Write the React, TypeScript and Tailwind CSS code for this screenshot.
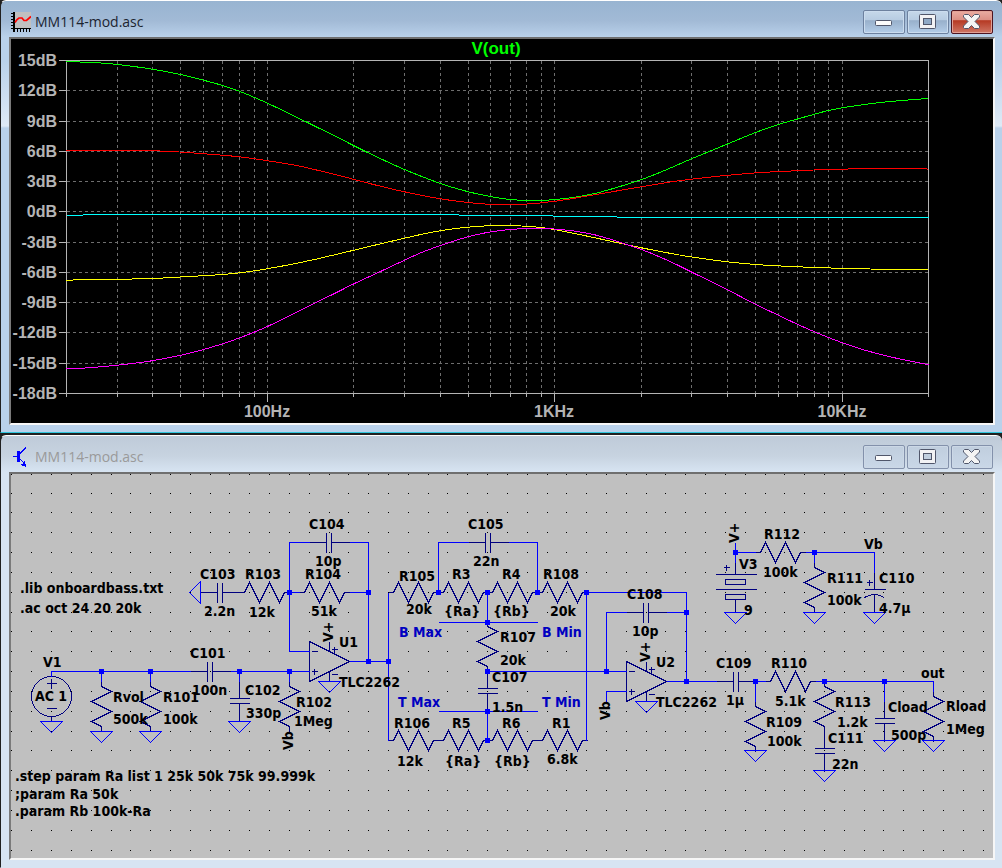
import { ReactNode } from 'react';

type Point = [number, number];

// ── WINDOW FRAME ──────────────────────────────────────
function MinimizeGlyph() {
  return (
    <svg viewBox="0 0 18 16" className="w-[18px] h-4" aria-hidden="true">
      <rect x="0.5" y="6.5" width="16" height="5" rx="1" fill="#fbfbfb" stroke="#50566a" />
    </svg>
  );
}

function MaximizeGlyph({ hole }: { hole: string }) {
  return (
    <svg viewBox="0 0 18 16" className="w-[18px] h-4" aria-hidden="true">
      <rect x="0.5" y="0.5" width="16" height="14" rx="1" fill="#f2f2f4" stroke="#50566a" />
      <rect x="4.5" y="4.5" width="8" height="6" fill={hole} stroke="#50566a" />
    </svg>
  );
}

function CloseGlyph() {
  return (
    <svg viewBox="0 0 18 16" className="w-[18px] h-4" aria-hidden="true">
      <path
        d="M0.5 1.5 L1.5 0.5 H5.5 L8.5 3.5 L11.5 0.5 H15.5 L16.5 1.5 V3 L12 7.5 L16.5 12 V13.5 L15.5 14.5 H11.5 L8.5 11.5 L5.5 14.5 H1.5 L0.5 13.5 V12 L5 7.5 L0.5 3 Z"
        fill="#f4f4f4"
        stroke="#50566a"
      />
    </svg>
  );
}

function Window({
  title,
  icon,
  active = false,
  children,
}: {
  title: string;
  icon: ReactNode;
  active?: boolean;
  children: ReactNode;
}) {
  const frame = active
    ? 'border-b-[#2fc6dd] bg-[linear-gradient(to_bottom,#98b4d1_0px,#a2bad6_20px,#b9d1ea_36px,#b9d1ea_60px,#dfeaf6_125px,#b9d1ea_127px)]'
    : 'border-b-[#d7e4f2] bg-[linear-gradient(to_bottom,#bfcbd9_0px,#c7d3e0_20px,#d7e4f2_36px)]';
  const button = active
    ? 'border-[#6d819f] bg-[linear-gradient(to_bottom,#c6d8ea_0%,#b7cce2_40%,#98b0cb_44%,#b4cde8_100%)]'
    : 'border-[#8391ab] bg-[linear-gradient(to_bottom,#c0cede_0%,#c9d7e7_100%)]';
  const close = active
    ? 'border-[#4e1420] bg-[linear-gradient(to_bottom,#eaaca2_0%,#dc8f84_40%,#b63a24_44%,#cf7766_100%)] shadow-[inset_0_0_0_1px_#e2a196]'
    : 'border-[#8391ab] bg-[linear-gradient(to_bottom,#c0cede_0%,#c9d7e7_100%)] shadow-[inset_0_0_0_1px_#ccd8e6]';
  const ring = active ? 'shadow-[inset_0_0_0_1px_#cbdcee]' : 'shadow-[inset_0_0_0_1px_#ccd8e6]';
  const base = 'flex items-center justify-center w-[42px] h-6 rounded-xs border';

  return (
    <section className={`pl-2 pr-[7px] pb-[7px] border-l border-l-[#202020] border-t border-t-white border-b rounded-t-md ${frame}`}>
      <header className="flex items-end gap-1 h-9 px-0.5 pb-[3px]">
        <div className="flex items-center gap-1 h-6 flex-1 min-w-0">
          {icon}
          <h1 className={`text-[14px] leading-6 truncate ${active ? 'text-[#1b2430]' : 'text-[#9a9a9a]'}`}>{title}</h1>
        </div>
        <div className="flex gap-0.5">
          <button type="button" aria-label="Minimize" className={`${base} ${button} ${ring}`}>
            <MinimizeGlyph />
          </button>
          <button type="button" aria-label="Maximize" className={`${base} ${button} ${ring}`}>
            <MaximizeGlyph hole={active ? '#8fa9c6' : '#c0cede'} />
          </button>
          <button type="button" aria-label="Close" className={`${base} ${close}`}>
            <CloseGlyph />
          </button>
        </div>
      </header>
      <div className="border-2 border-t-[#6f6f6f] border-l-[#7a7a7a] border-r-[#f6f6f6] border-b-[#f6f6f6]">{children}</div>
    </section>
  );
}

function PlotIcon() {
  return (
    <svg viewBox="0 0 20 20" className="w-5 h-5 shrink-0" aria-hidden="true">
      <g shapeRendering="crispEdges">
        <rect x="3" y="0" width="17" height="17" fill="#c0c0c0" />
        <path d="M2 0h2v20h-2zM2 16h18v1H2z" fill="#000" />
        <path
          d="M0 1h2v1H0zM0 4h2v1H0zM0 7h2v1H0zM0 10h2v1H0zM0 13h2v1H0zM0 16h2v1H0zM6 17h1v3H6zM9 17h1v3H9zM12 17h1v3h-1zM15 17h1v3h-1zM18 17h1v3h-1z"
          fill="#000"
        />
      </g>
      <path d="M4 10.5 L6 7.5 L8 6 H11 L13 8.5 H15.5 L20 4.5" fill="none" stroke="#f00" strokeWidth="1.7" />
    </svg>
  );
}

function TransistorIcon() {
  return (
    <svg viewBox="0 0 20 20" className="w-5 h-5 shrink-0" shapeRendering="crispEdges" aria-hidden="true">
      <path d="M2 9h4v1H2zM6 4h3v11H6z" fill="#00f" />
      <path d="M9 6.5 L15 0.5 M9 12 L15 18" stroke="#00f" />
      <path d="M14 14v5h-4l1-1h-1v-1h2v-1h1v-2z M14 18h1v2h-1z" fill="#00f" />
    </svg>
  );
}

// ── FREQUENCY RESPONSE PLOT ───────────────────────────
const LEFT = 66;
const RIGHT = 928;
const TOP = 60;
const BOTTOM = 393;

const DB_ROWS = [15, 12, 9, 6, 3, 0, -3, -6, -9, -12, -15, -18].map((db) => ({
  db,
  y: Math.round(TOP + ((15 - db) / 33) * (BOTTOM - TOP)),
}));

const FREQS = [
  30, 40, 50, 60, 70, 80, 90, 100, 200, 300, 400, 500, 600, 700, 800, 900, 1000,
  2000, 3000, 4000, 5000, 6000, 7000, 8000, 9000, 10000,
];

const freqX = (f: number) => Math.round(LEFT + (Math.log10(f / 20) / 3) * (RIGHT - LEFT));

const TRACES: { color: string; points: Point[] }[] = [
  {
    color: '#00ff00',
    points: [
      [66, 61], [97, 62.3], [117, 64], [152, 68.7], [180, 74], [203, 79.7], [222, 85], [239, 90.8], [254, 97],
      [267, 102.7], [290, 113.7], [313, 125], [334, 135.3], [353, 145], [375, 155.8], [404, 169], [440, 183],
      [468, 191.3], [490, 196], [508, 198.8], [532, 200.2], [555, 199], [575, 196.6], [600, 191.6],
      [641, 179], [668, 168.3], [691, 158.3], [727, 143.5], [755, 132], [778, 124], [797, 118.5], [814, 113.7],
      [828, 110], [842, 107.3], [862, 104.3], [880, 102], [901, 100], [928, 98],
    ],
  },
  {
    color: '#ff0000',
    points: [
      [66, 150], [140, 150], [170, 151], [203, 153.2], [239, 156.3], [267, 160.2], [295, 164.8], [313, 168.8],
      [334, 173.8], [353, 178.8], [375, 184.5], [404, 191.3], [440, 198.3], [468, 202], [490, 203.8], [520, 204],
      [555, 200.7], [600, 193.2], [641, 186.3], [668, 181.8], [691, 178.7], [717, 175.8], [755, 172.4], [797, 170.2],
      [828, 169], [862, 168.3], [915, 168.2], [928, 168.6],
    ],
  },
  {
    color: '#ffff00',
    points: [
      [66, 279.6], [117, 278.8], [152, 278], [180, 276.5], [203, 275.2], [222, 274], [239, 272.3], [254, 270.3],
      [267, 268.2], [290, 264], [313, 259.2], [334, 254.3], [353, 249.8], [380, 243.3], [404, 237.7], [425, 233],
      [440, 230.3], [455, 228], [468, 226.6], [485, 225.4], [500, 225], [515, 225.2], [541, 227], [555, 229.3],
      [575, 233.2], [600, 238.5], [641, 247.3], [668, 252.5], [691, 256.5], [727, 261.3], [755, 264],
      [797, 266.3], [842, 267.9], [870, 268.5], [898, 269], [928, 269.3],
    ],
  },
  {
    color: '#ff00ff',
    points: [
      [66, 368.4], [79, 367.9], [100, 366.3], [117, 364.7], [134, 362.7], [152, 360.2], [180, 354.8], [203, 349],
      [222, 343.3], [239, 337.4], [254, 331.5], [267, 326], [290, 314.8], [313, 303.3], [334, 293], [353, 283.5],
      [375, 273.3], [404, 259.7], [421, 252], [440, 245], [455, 240], [468, 236.2], [485, 232.3], [500, 230],
      [520, 228.3], [540, 227.9], [553, 228.5], [575, 230.7], [595, 234.5], [610, 238.8], [641, 249], [668, 260.3],
      [691, 271.5], [727, 289.3], [755, 303.8], [778, 314.8], [797, 323.8], [814, 331.3], [828, 337], [842, 342.3],
      [862, 349], [890, 356.4], [928, 364.3],
    ],
  },
];

// Catmull-Rom spline through the sampled points
function smoothPath(points: Point[]) {
  let d = `M${points[0][0]} ${points[0][1]}`;
  for (let i = 0; i < points.length - 1; i++) {
    const p0 = points[i - 1] || points[i];
    const p1 = points[i];
    const p2 = points[i + 1];
    const p3 = points[i + 2] || p2;
    const c1 = [p1[0] + (p2[0] - p0[0]) / 6, p1[1] + (p2[1] - p0[1]) / 6];
    const c2 = [p2[0] - (p3[0] - p1[0]) / 6, p2[1] - (p3[1] - p1[1]) / 6];
    d += `C${c1[0]} ${c1[1]} ${c2[0]} ${c2[1]} ${p2[0]} ${p2[1]}`;
  }
  return d;
}

function ResponsePlot() {
  return (
    <svg viewBox="11 39 982 384" className="block w-full h-auto bg-black" role="img" aria-label="V(out)">
      <g transform="translate(0.5 0.5)" shapeRendering="crispEdges" fill="none">
        <g stroke="#6e6e6e" strokeDasharray="3 3">
          {DB_ROWS.slice(1, -1).map(({ db, y }) => (
            <path key={db} d={`M${LEFT} ${y}H${RIGHT}`} />
          ))}
          {FREQS.map((f) => (
            <path key={f} d={`M${freqX(f)} ${TOP}V${BOTTOM}`} />
          ))}
        </g>
        <g stroke="#b4b4b4">
          <path d={`M${LEFT} ${TOP}H${RIGHT}V${BOTTOM}H${LEFT}Z`} />
          {DB_ROWS.map(({ db, y }) => (
            <path key={db} d={`M58 ${y}H${LEFT}`} />
          ))}
          {[20, ...FREQS, 20000].map((f) => (
            <path key={f} d={`M${freqX(f)} ${BOTTOM}v${[100, 1000, 10000].includes(f) ? 8 : 3}`} />
          ))}
        </g>
        {TRACES.map(({ color, points }) => (
          <path key={color} d={smoothPath(points)} stroke={color} />
        ))}
        <path d="M66 215H82M82 214H458M458 215H552M552 216H616M616 217H928" stroke="#00ffff" />
      </g>
      <g className="font-['Liberation_Sans',Arial,sans-serif] font-bold text-[16px]" fill="#b4b4b4">
        {DB_ROWS.map(({ db, y }) => (
          <text key={db} x="57" y={y + 6} textAnchor="end">{`${db}dB`}</text>
        ))}
        <text x="267" y="417" textAnchor="middle">100Hz</text>
        <text x="554" y="417" textAnchor="middle">1KHz</text>
        <text x="842" y="417" textAnchor="middle">10KHz</text>
        <text x="496" y="54" textAnchor="middle" fill="#00ff00" className="text-[17px]">V(out)</text>
      </g>
    </svg>
  );
}

// ── SCHEMATIC ─────────────────────────────────────────
const RESISTORS_H: Point[] = [
  [239, 592], [299, 592], [388, 592], [438, 592], [487, 592], [537, 592],
  [388, 740], [438, 740], [487, 740], [537, 740], [755, 552], [765, 681],
];
const RESISTORS_V: Point[] = [
  [101, 681], [150, 681], [289, 681], [487, 621], [755, 701], [814, 562], [824, 681], [933, 691],
];
const CAPS_H: Point[] = [[200, 592], [190, 671], [309, 542], [468, 542], [626, 612], [716, 681]];
const CAPS_V: Point[] = [[239, 681], [487, 671], [824, 731], [884, 701]];
const OPAMPS: Point[] = [[309, 661], [626, 681]];
const GROUNDS: Point[] = [
  [51, 721], [101, 731], [150, 731], [239, 721], [329, 681], [646, 701], [755, 750],
  [735, 612], [814, 612], [874, 612], [824, 770], [884, 740], [933, 740],
];
const NODES: Point[] = [
  [101, 671], [150, 671], [239, 671], [289, 671], [289, 592], [368, 592], [368, 661], [388, 661],
  [438, 592], [487, 592], [537, 592], [487, 622], [487, 671], [487, 711], [487, 740], [586, 592],
  [606, 671], [686, 612], [686, 681], [735, 552], [755, 681], [814, 552], [824, 681], [884, 681],
];
const WIRES = [
  'M51 676V671H190', 'M230 671H309', 'M101 671V681', 'M150 671V681', 'M239 671V681', 'M289 671V681',
  'M289 592V542H309', 'M349 542H368V661', 'M349 592H368', 'M289 592H299', 'M289 592V651H309',
  'M349 661H388', 'M388 592V740', 'M438 592V542H468', 'M508 542H537V592', 'M487 592V621',
  'M438 622H537', 'M487 711V740', 'M438 711H537', 'M487 671H626', 'M586 592V740',
  'M586 592H686V681', 'M606 671V612H626', 'M666 612H686', 'M666 681H716', 'M626 691H606V701',
  'M755 681V701', 'M755 681H765', 'M735 542V562', 'M735 552H755', 'M805 552H874V572',
  'M814 552V562', 'M815 681H933V691', 'M884 681V701',
];

const LABELS: [number, number, string][] = [
  [20, 593, '.lib onboardbass.txt'], [20, 613, '.ac oct 24 20 20k'],
  [15, 781, '.step param Ra list 1 25k 50k 75k 99.999k'], [15, 799, ';param Ra 50k'], [15, 816, '.param Rb 100k-Ra'],
  [43, 667, 'V1'], [35, 701, 'AC 1'], [113, 702, 'Rvol'], [113, 724, '500k'], [163, 702, 'R101'], [163, 724, '100k'],
  [190, 658, 'C101'], [192, 695, '100n'], [245, 695, 'C102'], [246, 718, '330p'], [296, 707, 'R102'], [294, 726, '1Meg'],
  [200, 579, 'C103'], [204, 616, '2.2n'], [245, 579, 'R103'], [249, 617, '12k'],
  [309, 529, 'C104'], [315, 566, '10p'], [305, 579, 'R104'], [311, 616, '51k'], [339, 647, 'U1'], [339, 687, 'TLC2262'],
  [399, 581, 'R105'], [406, 614, '20k'], [468, 529, 'C105'], [473, 566, '22n'], [452, 579, 'R3'], [444, 616, '{Ra}'],
  [502, 579, 'R4'], [493, 616, '{Rb}'], [543, 579, 'R108'], [550, 616, '20k'],
  [500, 642, 'R107'], [500, 665, '20k'], [492, 682, 'C107'], [492, 712, '1.5n'],
  [394, 728, 'R106'], [397, 766, '12k'], [452, 728, 'R5'], [445, 766, '{Ra}'], [502, 728, 'R6'], [494, 766, '{Rb}'],
  [552, 728, 'R1'], [547, 764, '6.8k'],
  [627, 599, 'C108'], [632, 636, '10p'], [656, 667, 'U2'], [656, 707, 'TLC2262'],
  [739, 569, 'V3'], [744, 615, '9'], [764, 539, 'R112'], [763, 577, '100k'],
  [716, 668, 'C109'], [726, 705, '1µ'], [771, 668, 'R110'], [775, 706, '5.1k'], [766, 727, 'R109'], [767, 746, '100k'],
  [864, 549, 'Vb'], [827, 583, 'R111'], [827, 605, '100k'], [879, 583, 'C110'], [879, 613, '4.7µ'],
  [835, 707, 'R113'], [837, 727, '1.2k'], [828, 743, 'C111'], [832, 769, '22n'],
  [888, 712, 'Cload'], [891, 740, '500p'], [921, 678, 'out'], [946, 711, 'Rload'], [946, 734, '1Meg'],
];

// net names that read upwards, anchored at their lower end
const NET_LABELS: [number, number, string][] = [
  [333, 642, 'V+'], [650, 662, 'V+'], [739, 543, 'V+'], [293, 750, 'Vb'], [610, 720, 'Vb'],
];

const POT_LABELS: [number, number, string][] = [
  [399, 637, 'B Max'], [542, 637, 'B Min'], [398, 707, 'T Max'], [542, 707, 'T Min'],
];

function gridDots() {
  let d = '';
  for (let row = 0; row < 20; row++) {
    for (let col = 0; col < 50; col++) {
      const x = Math.floor(11.9 + 19.82 * col);
      const y = Math.max(474, Math.floor(473.3 + 19.83 * row));
      d += `M${x} ${y}h1v1h-1z`;
    }
  }
  return d;
}

function Schematic() {
  return (
    <svg viewBox="11 474 982 384" className="block w-full h-auto bg-[#c0c0c0]" role="img" aria-label="Schematic">
      <path d={gridDots()} fill="#000" shapeRendering="crispEdges" />
      <g transform="translate(0.5 0.5)" shapeRendering="crispEdges" fill="none" stroke="#00007f">
        {RESISTORS_H.map(([x, y]) => (
          <path key={`${x}-${y}`} d={`M${x} ${y}h5l5-10l10 20l10-20l10 20l5-10h5`} />
        ))}
        {RESISTORS_V.map(([x, y]) => (
          <path key={`${x}-${y}`} d={`M${x} ${y}v5l10 5l-20 10l20 10l-20 10l10 5v5`} />
        ))}
        {CAPS_H.map(([x, y]) => (
          <path key={`${x}-${y}`} d={`M${x} ${y}h17m0-10v20m5-20v20m0-10h18`} />
        ))}
        {CAPS_V.map(([x, y]) => (
          <path key={`${x}-${y}`} d={`M${x} ${y}v17m-10 0h20m-20 5h20m-10 0v18`} />
        ))}
        {OPAMPS.map(([x, y]) => (
          <g key={x} transform={`translate(${x} ${y})`}>
            <path d="M0-20V20L40 0ZM20-20v10M20 10v10" />
            <path d="M2-10h6M2 10h6M5 7v6M22-12h6M25-15v6M22 13h6" />
          </g>
        ))}
        {/* V1 */}
        <circle cx="51" cy="696" r="20" />
        <path d="M46 683h10M51 678v10M46 708h10M51 716v5" />
        {/* V3 */}
        <path d="M735 562v12M715 574h41M725 579h20v5h-20zM715 589h41M725 594h20v5h-20zM735 599v13M723 567h6M726 564v6" />
        {/* C110 */}
        <path d="M874 572v17M864 589h21M864 597q10-6 20 0M874 594v18M866 582h6M869 579v6" />
      </g>
      <g transform="translate(0.5 0.5)" shapeRendering="crispEdges" fill="none" stroke="#0000ff">
        {WIRES.map((d) => (
          <path key={d} d={d} />
        ))}
        {GROUNDS.map(([x, y]) => (
          <path key={`${x}-${y}`} d={`M${x - 11} ${y}h22l-11 11z`} />
        ))}
        <path d="M200 581v22l-11-11z" />
      </g>
      <g fill="#0000ff" shapeRendering="crispEdges">
        {NODES.map(([x, y]) => (
          <rect key={`${x}-${y}`} x={x - 2} y={y - 2} width="5" height="5" />
        ))}
      </g>
      <g className="font-['DejaVu_Sans_Condensed','Noto_Sans',sans-serif] font-bold text-[14px]" fill="#000">
        {LABELS.map(([x, y, text]) => (
          <text key={`${x}-${y}`} x={x} y={y}>{text}</text>
        ))}
        {NET_LABELS.map(([x, y, text]) => (
          <text key={`${x}-${y}`} transform={`translate(${x} ${y}) rotate(-90)`}>{text}</text>
        ))}
        {POT_LABELS.map(([x, y, text]) => (
          <text key={`${x}-${y}`} x={x} y={y} fill="#0000c0">{text}</text>
        ))}
      </g>
    </svg>
  );
}

// ── PAGE ──────────────────────────────────────────────
export default function App() {
  return (
    <main className="flex flex-col gap-0.5 bg-[#202020] font-['Open_Sans','Noto_Sans',sans-serif]">
      <Window title="MM114-mod.asc" icon={<PlotIcon />} active>
        <ResponsePlot />
      </Window>
      <Window title="MM114-mod.asc" icon={<TransistorIcon />}>
        <Schematic />
      </Window>
    </main>
  );
}
